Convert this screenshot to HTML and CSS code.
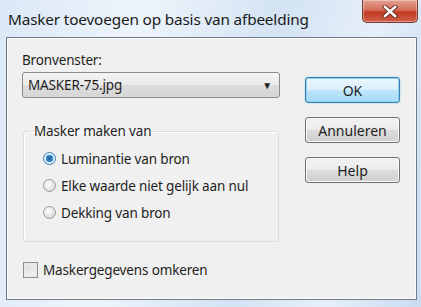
FILE: index.html
```html
<!DOCTYPE html>
<html>
<head>
  <title>Masker toevoegen op basis van afbeelding</title>
  <link rel="stylesheet" href="styles.css">
</head>
<body>
  <div class="window">
    <div class="titlebar">
      <span class="title">Masker toevoegen op basis van afbeelding</span>
      <button class="close" type="button" aria-label="Sluiten">
        <svg width="16" height="13" viewBox="0 0 16 13">
          <path d="M3 2 L13 11 M13 2 L3 11" stroke="#6b2a20" stroke-width="4.4" stroke-linecap="square"/>
          <path d="M3 2 L13 11 M13 2 L3 11" stroke="#fff" stroke-width="2.6" stroke-linecap="square"/>
        </svg>
      </button>
    </div>
    <div class="client">
      <div class="main">
        <label class="field-label" for="source">Bronvenster:</label>
        <div class="select" id="source">
          <span>MASKER-75.jpg</span>
          <span class="arrow">&#9660;</span>
        </div>
        <fieldset class="group">
          <legend>Masker maken van</legend>
          <div class="radio-row"><span class="radio checked"></span>Luminantie van bron</div>
          <div class="radio-row"><span class="radio"></span>Elke waarde niet gelijk aan nul</div>
          <div class="radio-row"><span class="radio"></span>Dekking van bron</div>
        </fieldset>
        <div class="check-row"><span class="checkbox"></span>Maskergegevens omkeren</div>
      </div>
      <div class="buttons">
        <button class="btn default" type="button">OK</button>
        <button class="btn" type="button">Annuleren</button>
        <button class="btn" type="button">Help</button>
      </div>
    </div>
  </div>
</body>
</html>
```

FILE: styles.css
```css
body {
  margin: 0;
  padding: 0;
  font-family: "Noto Sans", sans-serif;
  font-size: 13.5px;
  letter-spacing: -0.15px;
  color: #1e1e1e;
}
.window {
  width: 421px;
  height: 307px;
  box-sizing: border-box;
  padding: 0 4px 7px 6px;
  background: linear-gradient(100deg, #dbe8f6 0%, #eef4fb 30%, #d3e3f3 60%, #e6eff9 80%, #c9dcf0 100%);
  display: flex;
  flex-direction: column;
}
.titlebar {
  height: 37px;
  display: flex;
  justify-content: space-between;
  align-items: flex-start;
}
.title {
  font-size: 15.3px;
  margin: 9px 0 0 2px;
  color: #1a1a1a;
}
.close {
  width: 56px;
  height: 23px;
  margin-right: -1px;
  border: 1px solid #7a3a30;
  border-top: none;
  border-radius: 0 0 5px 5px;
  background: linear-gradient(#e4a192 0%, #d4705c 45%, #c0391f 55%, #d0604a 100%);
  box-shadow: inset 0 0 0 1px rgba(255, 255, 255, 0.35);
  display: flex;
  align-items: center;
  justify-content: center;
  padding: 0;
}
.client {
  flex: 1;
  display: flex;
  background: #f0f0f0;
  border: 1px solid #6f7b88;
  box-shadow: inset 0 0 0 1px #fdfdfd;
}
.main {
  width: 258px;
  padding: 12px 0 0 15px;
  display: flex;
  flex-direction: column;
}
.field-label {
  line-height: 20px;
}
.select {
  margin-top: 2px;
  height: 26px;
  box-sizing: border-box;
  border: 1px solid #8b8b8b;
  border-radius: 3px;
  background: linear-gradient(#f4f4f4 0%, #ebebeb 50%, #dcdcdc 51%, #d6d6d6 100%);
  display: flex;
  align-items: center;
  justify-content: space-between;
  padding: 0 7px 0 5px;
}
.arrow {
  font-size: 10px;
}
.group {
  margin: 24px 0 0 1px;
  width: 256px;
  height: 120px;
  box-sizing: border-box;
  border: 1px solid #d5dfe5;
  border-radius: 3px;
  padding: 5px 0 0 19px;
  box-shadow: inset 1px 1px 0 #fff;
}
.group legend {
  padding: 0 2px;
  margin-left: -11px;
}
.radio-row {
  display: flex;
  align-items: center;
  height: 27px;
}
.radio {
  width: 13px;
  height: 13px;
  border-radius: 50%;
  border: 1px solid #9a9a9a;
  background: radial-gradient(circle at 40% 35%, #fdfdfd, #d0d0d0);
  margin-right: 5px;
  box-sizing: border-box;
  flex: none;
}
.radio.checked {
  border-color: #3c7fb1;
  background: radial-gradient(circle, #1b5f9c 0, #3a8fd0 3.5px, #e3eef8 4px, #cfe3f5 100%);
}
.check-row {
  margin-top: 19px;
  display: flex;
  align-items: center;
}
.checkbox {
  width: 15px;
  height: 16px;
  box-sizing: border-box;
  border: 1px solid #8f8f8f;
  background: linear-gradient(135deg, #d9d9d9, #f6f6f6);
  box-shadow: inset 0 0 0 2px #eaeaea;
  margin: 0 5px 0 1px;
}
.buttons {
  margin-left: 25px;
  padding-top: 39px;
  display: flex;
  flex-direction: column;
  gap: 14px;
}
.btn {
  width: 95px;
  height: 26px;
  font-family: inherit;
  font-size: 14px;
  color: #1e1e1e;
  border: 1px solid #707070;
  border-radius: 3px;
  background: linear-gradient(#f2f2f2 0%, #ebebeb 50%, #dddddd 51%, #cfcfcf 100%);
  box-shadow: inset 0 0 0 1px #fafafa;
  padding: 0;
}
.btn.default {
  border-color: #3c7fb1;
  background: linear-gradient(#eaf6fd 0%, #d9f0fc 50%, #bee6fd 51%, #a7d9f5 100%);
  box-shadow: inset 0 0 0 1px #8fd0ee, 0 0 2px #8ccfee;
}
```
